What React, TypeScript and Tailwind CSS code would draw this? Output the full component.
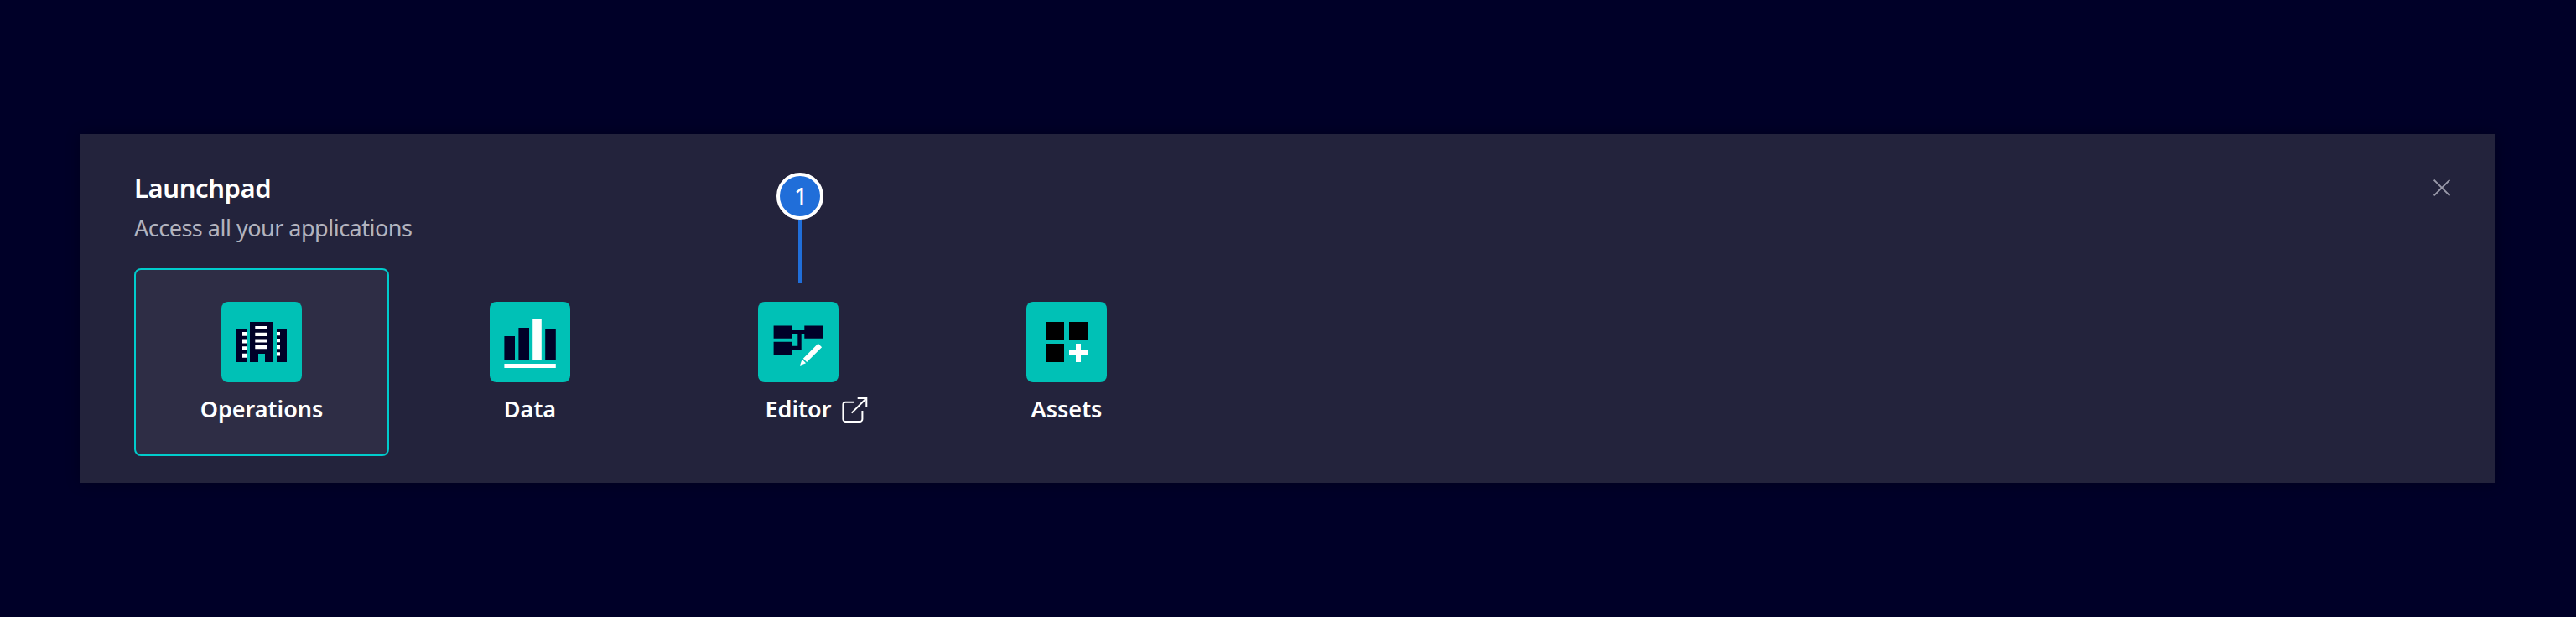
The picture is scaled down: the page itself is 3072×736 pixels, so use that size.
import type { ReactNode } from "react";

function AppTile({ label, selected, external, children }: { label: string; selected?: boolean; external?: boolean; children: ReactNode }) {
  return (
    <button
      className={
        selected
          ? "flex h-[224px] w-[304px] flex-col items-center rounded-lg border-2 border-[#00cccc] bg-[#2e2d45] pt-[38px]"
          : "flex h-[224px] w-[304px] flex-col items-center rounded-lg border-2 border-transparent pt-[38px]"
      }
    >
      <span className="block size-24 rounded-lg bg-[#00c1b6]">
        <svg viewBox="0 0 96 96" className="block size-24">
          {children}
        </svg>
      </span>
      <span className="relative mt-[15px] block w-full text-center text-[27px] leading-[33px] font-semibold text-white">
        {label}
        {external && (
          <svg viewBox="0 0 36 36" fill="none" stroke="#ffffff" strokeWidth="2" className="absolute top-px left-[200px] size-9">
            <path d="M16.7 7.7H6.4a3 3 0 0 0-3 3V28a3 3 0 0 0 3 3h17a3 3 0 0 0 3-3V18" />
            <path d="M20.7 3h10.6v10.7M31.3 3 13.7 20.6" />
          </svg>
        )}
      </span>
    </button>
  );
}

function OperationsIcon() {
  return (
    <>
      <path fill="#000028" d="M18 32h12v40H18zM66 32h12v40H66zM34 24h28v48H52V62h-8v10H34z" />
      <path
        fill="#ffffff"
        d="M25 36h5v4.8h-5zM25 44.6h5v4.8h-5zM25 53.2h5V58h-5zM25 61.8h5v4.9h-5zM40.3 29H55v4.1H40.3zM40.3 36.7H55V41H40.3zM40.3 44.4H55v4.2H40.3zM40.3 52.1H55v4.2H40.3zM66 36h4v4.2h-4zM66 44h4v4.2h-4zM66 52h4v4.2h-4zM66 60.2h4v4.2h-4z"
      />
    </>
  );
}

function DataIcon() {
  return (
    <>
      <path fill="#000028" d="M17.4 41H30v29H17.4zM34.4 31H47v39H34.4zM66.2 33h12.6v37H66.2z" />
      <path fill="#ffffff" d="M51.2 21h10.6v49H51.2zM17.4 74h61.4v5H17.4z" />
    </>
  );
}

function EditorIcon() {
  return (
    <>
      <path
        fill="#000028"
        d="M18.6 28.4H41V34h14.3v-5.6h22.4v15.3H55.3v-5.3h-3.6V57H41v6H18.6V47.7H41v5h6.3V38.4H41v5.3H18.6z"
      />
      <path fill="#ffffff" d="M71.7 49.8 76.1 54.2 58.2 72.1 53.8 67.7zM52.5 68.7 57.1 73.3 50 76z" />
    </>
  );
}

function AssetsIcon() {
  return (
    <>
      <path fill="#000000" d="M23 24h22v22H23zM51 24h22v22H51zM23 50h22v22H23z" />
      <path fill="#ffffff" d="M59 50h6v8h8v6h-8v8h-6v-8h-8v-6h8z" />
    </>
  );
}

function Marker() {
  return (
    <div className="absolute top-[46px] left-[830px] flex w-14 flex-col items-center">
      <div className="size-14 rounded-full border-4 border-white bg-[#206ed9] pl-0.5 text-center text-[27px] leading-[47px] font-medium text-white">1</div>
      <div className="h-[76px] w-1 bg-[#206ed9]" />
    </div>
  );
}

export default function App() {
  return (
    <div className="h-[736px] w-[3072px] bg-[#000028] px-24 py-40 font-['Noto_Sans',sans-serif]">
      <section className="relative h-[416px] bg-[#23233c] px-16 pt-11 shadow-[0_0_16px_rgba(0,0,0,0.3)]">
        <header className="flex h-[116px] items-start justify-between">
          <div>
            <h1 className="text-[31px] leading-10 font-semibold tracking-[-0.4px] text-white">Launchpad</h1>
            <p className="mt-[11px] text-[27px] leading-[33px] tracking-[-0.5px] text-[#b3b3be]">Access all your applications</p>
          </div>
          <button aria-label="Close" className="mt-1 -mr-6 flex size-10 items-center justify-center">
            <svg viewBox="0 0 40 40" fill="none" stroke="#9999a9" strokeWidth="2" className="size-10">
              <path d="M6.6 6.6 25.4 25.4M25.4 6.6 6.6 25.4" />
            </svg>
          </button>
        </header>
        <nav className="flex gap-4">
          <AppTile label="Operations" selected>
            <OperationsIcon />
          </AppTile>
          <AppTile label="Data">
            <DataIcon />
          </AppTile>
          <AppTile label="Editor" external>
            <EditorIcon />
          </AppTile>
          <AppTile label="Assets">
            <AssetsIcon />
          </AppTile>
        </nav>
        <Marker />
      </section>
    </div>
  );
}
